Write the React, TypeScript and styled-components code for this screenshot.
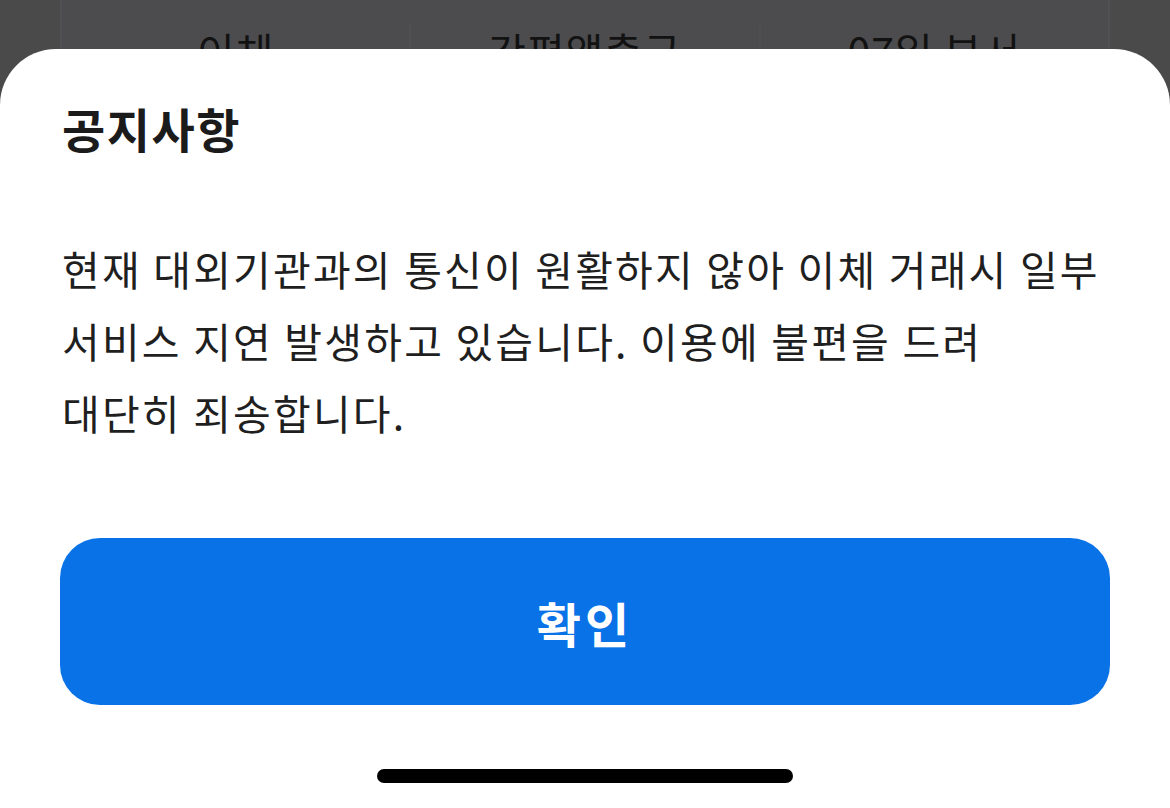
import React from "react";
import styled, { createGlobalStyle } from "styled-components";

const GlobalStyle = createGlobalStyle`
    html, body {
        margin: 0;
        padding: 0;
        background: #4a4a4b;
    }
    body {
        font-family: "Noto Sans CJK KR", "Noto Sans", sans-serif;
        -webkit-font-smoothing: antialiased;
    }
`;

const Screen = styled.div`
    position: relative;
    width: 1170px;
    height: 808px;
    overflow: hidden;
    background: #4a4a4b;
`;

// dimmed page behind the sheet
const MenuTabs = styled.div`
    display: flex;
    margin: 0 60px;
    height: 120px;
    border-left: 2px solid #515153;
    border-right: 2px solid #515153;
    background: #4c4c4e;
`;

const MenuTab = styled.div<{ divider?: boolean }>`
    flex: 1;
    display: flex;
    justify-content: center;
    margin-top: 25px;
    padding-top: 5px;
    font-size: 41px;
    line-height: 1;
    letter-spacing: 1px;
    color: #121212;
    border-left: ${(p) => (p.divider ? "2px solid #505052" : "none")};
`;

const Sheet = styled.div`
    position: absolute;
    top: 49px;
    left: 0;
    right: 0;
    bottom: 0;
    display: flex;
    flex-direction: column;
    padding: 49px 60px 0 62px;
    background: #ffffff;
    border-radius: 56px 56px 0 0;
`;

const Title = styled.h1`
    margin: 0;
    font-size: 47px;
    line-height: 60px;
    font-weight: 700;
    letter-spacing: 1.5px;
    color: #1b1b1b;
`;

const Message = styled.p`
    margin: 74px 0 0;
    font-size: 41px;
    line-height: 72px;
    font-weight: 400;
    letter-spacing: 2.2px;
    color: #1f1f1f;
    white-space: pre-line;
`;

const ConfirmButton = styled.button`
    margin: 90px 0 0 -2px;
    height: 167px;
    border: none;
    border-radius: 40px;
    background: #0a72e7;
    color: #ffffff;
    font-family: inherit;
    font-size: 48px;
    font-weight: 700;
    letter-spacing: 4px;
    cursor: pointer;
`;

const HomeBar = styled.div`
    align-self: center;
    margin: 64px 0 0 -2px;
    width: 416px;
    height: 14px;
    border-radius: 7px;
    background: #000000;
`;

const tabs = ["이체", "간편앱출금", "07일 부서"];

const App: React.FC = () => {
    return (
        <Screen>
            <GlobalStyle />
            <MenuTabs>
                {tabs.map((t, i) => (
                    <MenuTab key={t} divider={i > 0}>
                        {t}
                    </MenuTab>
                ))}
            </MenuTabs>
            <Sheet>
                <Title>공지사항</Title>
                <Message>
                    {"현재 대외기관과의 통신이 원활하지 않아 이체 거래시 일부\n서비스 지연 발생하고 있습니다. 이용에 불편을 드려\n대단히 죄송합니다."}
                </Message>
                <ConfirmButton>확인</ConfirmButton>
                <HomeBar />
            </Sheet>
        </Screen>
    );
};

export default App;
